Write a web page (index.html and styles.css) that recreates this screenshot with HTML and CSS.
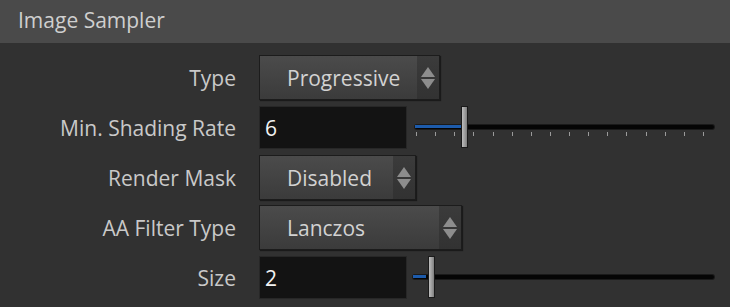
FILE: index.html
```html
<!DOCTYPE html>
<html lang="en">
<head>
    <meta charset="UTF-8">
    <title>Image Sampler</title>
    <link rel="stylesheet" href="styles.css">
</head>
<body>
    <div class="panel">
        <div class="panel-title">Image Sampler</div>

        <div class="form">
            <label class="field-label">Type</label>
            <div class="field">
                <div class="menu menu-type">
                    <span class="menu-value">Progressive</span>
                    <span class="menu-arrows"><i class="up"></i><i class="down"></i></span>
                </div>
            </div>

            <label class="field-label">Min. Shading Rate</label>
            <div class="field">
                <div class="num-input">6</div>
                <div class="slider">
                    <div class="track"><div class="fill" style="width: 46px"></div></div>
                    <div class="handle" style="left: 46px"></div>
                    <div class="ticks">
                        <i></i><i></i><i></i><i></i><i></i><i></i><i></i><i></i>
                        <i></i><i></i><i></i><i></i><i></i><i></i><i></i><i></i>
                    </div>
                </div>
            </div>

            <label class="field-label">Render Mask</label>
            <div class="field">
                <div class="menu menu-mask">
                    <span class="menu-value">Disabled</span>
                    <span class="menu-arrows"><i class="up"></i><i class="down"></i></span>
                </div>
            </div>

            <label class="field-label">AA Filter Type</label>
            <div class="field">
                <div class="menu menu-filter">
                    <span class="menu-value">Lanczos</span>
                    <span class="menu-arrows"><i class="up"></i><i class="down"></i></span>
                </div>
            </div>

            <label class="field-label">Size</label>
            <div class="field">
                <div class="num-input">2</div>
                <div class="slider slider-plain">
                    <div class="track"><div class="fill" style="width: 13px"></div></div>
                    <div class="handle" style="left: 13px"></div>
                </div>
            </div>
        </div>
    </div>
</body>
</html>
```

FILE: styles.css
```css
body {
    margin: 0;
    background-color: #313131;
    font-family: "Open Sans", "DejaVu Sans", sans-serif;
    color: #c9c9c9;
}
.panel-title {
    height: 43px;
    line-height: 41px;
    padding-left: 18px;
    background-color: #4a4a4a;
    font-size: 21px;
    color: #cfcfcf;
}
.form {
    display: grid;
    grid-template-columns: 236px 1fr;
    column-gap: 23px;
    row-gap: 5px;
    padding-top: 12px;
}
.field-label {
    text-align: right;
    font-size: 21px;
    line-height: 47px;
    height: 45px;
    white-space: nowrap;
}
.field {
    display: flex;
    align-items: center;
    height: 45px;
}
.menu {
    display: flex;
    height: 43px;
    border: 1px solid #1c1c1c;
    background: linear-gradient(#4b4b4b, #3b3b3b);
    box-shadow: 1px 1px 1px rgba(0, 0, 0, 0.45);
    box-sizing: content-box;
}
.menu-type { width: 179px; }
.menu-mask { width: 155px; }
.menu-filter { width: 201px; }
.menu-value {
    flex: 1;
    padding-left: 27px;
    line-height: 44px;
    font-size: 21px;
    color: #d2d2d2;
}
.menu-arrows {
    width: 22px;
    display: flex;
    flex-direction: column;
    align-items: center;
    justify-content: center;
    gap: 2px;
    background: linear-gradient(#3b3b3b, #323232);
}
.menu-arrows i {
    width: 0;
    height: 0;
    border-left: 7px solid transparent;
    border-right: 7px solid transparent;
}
.menu-arrows .up { border-bottom: 10px solid #8d8d8d; }
.menu-arrows .down { border-top: 10px solid #8d8d8d; }
.num-input {
    width: 141px;
    height: 41px;
    border: 1px solid #272727;
    background-color: #131313;
    padding-left: 5px;
    line-height: 42px;
    font-size: 21px;
    color: #f2f2f2;
}
.slider {
    position: relative;
    width: 299px;
    height: 43px;
    margin-left: 8px;
}
.track {
    position: absolute;
    left: 0;
    right: 0;
    top: 19px;
    height: 4px;
    background-color: #050505;
    border-radius: 2px;
    box-shadow: 0 0 0 1px #1a1a1a;
}
.fill {
    height: 3px;
    background-color: #1d5bab;
}
.handle {
    position: absolute;
    top: 0;
    width: 5px;
    height: 40px;
    border: 1px solid #1a1a1a;
    background: linear-gradient(90deg, #bdbdbd, #9a9a9a 60%, #7e7e7e);
}
.ticks {
    position: absolute;
    left: 1px;
    top: 26px;
    width: 288px;
    display: flex;
    justify-content: space-between;
}
.ticks i {
    width: 1px;
    height: 4px;
    background-color: #9a9a9a;
}
.slider-plain .track {
    left: -2px;
}
```
